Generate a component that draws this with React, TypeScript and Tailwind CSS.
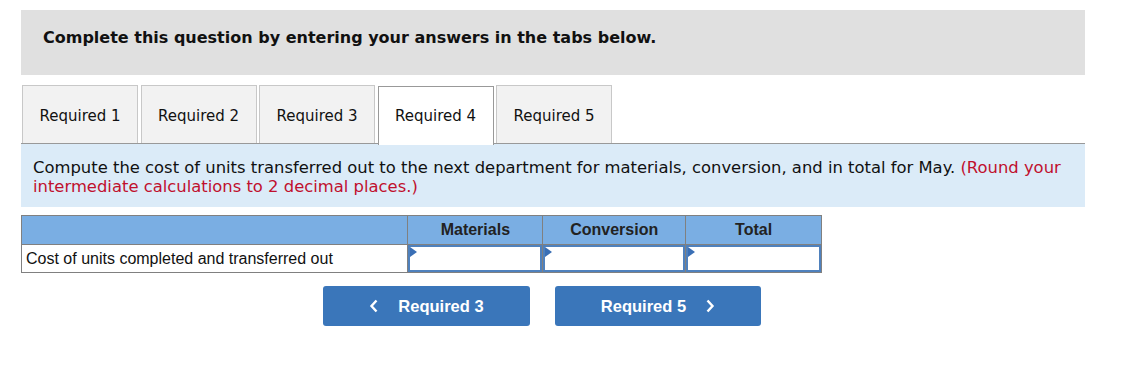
import React from "react";

const tabs = ["Required 1", "Required 2", "Required 3", "Required 4", "Required 5"];

function InputCell() {
  return (
    <td className="border border-[#808080] p-0 h-[28px]">
      <div className="relative h-full border-2 border-[#4f81bd] bg-white">
        <div className="absolute left-0 top-0 w-0 h-0 border-t-[5px] border-b-[5px] border-l-[7px] border-t-transparent border-b-transparent border-l-[#3a6fb5]" />
      </div>
    </td>
  );
}

export default function App() {
  return (
    <div className="w-[1135px] h-[390px] bg-white pt-[10px] pl-[21px]" style={{ fontFamily: '"DejaVu Sans", Verdana, sans-serif' }}>
      <div className="w-[1064px] h-[65px] bg-[#e0e0e0] pl-[22px] pt-[16px]">
        <div className="text-[16px] font-bold text-[#111]">Complete this question by entering your answers in the tabs below.</div>
      </div>
      <div className="mt-[10px] w-[1064px] flex gap-[2.5px] pl-[1px] border-b border-[#999] h-[59px]">
        {tabs.map((t, i) => (
          <div
            key={t}
            className={
              i === 3
                ? "w-[116px] h-[59px] bg-white border border-[#999] border-b-0 flex items-center justify-center pt-[1px] text-[15px] text-[#111] relative top-[1px]"
                : "w-[116px] h-[58px] bg-[#f2f2f2] border border-[#c8c8c8] border-b-0 flex items-center justify-center pt-[3px] text-[15px] text-[#111]"
            }
          >
            {t}
          </div>
        ))}
      </div>
      <div className="w-[1064px] h-[63px] bg-[#dbebf8] pl-[12px] pt-[14px] text-[16.4px] leading-[19px] text-[#111]">
        Compute the cost of units transferred out to the next department for materials, conversion, and in total for May.{" "}
        <span className="text-[#c0102e]">(Round your intermediate calculations to 2 decimal places.)</span>
      </div>
      <table className="mt-[8px] border-collapse w-[801px]" style={{ fontFamily: '"Liberation Sans", Arial, sans-serif' }}>
        <thead>
          <tr className="bg-[#7aaee3] h-[29px]">
            <th className="border border-[#808080] w-[387px]"></th>
            <th className="border border-[#808080] w-[135px] text-[16px] font-bold text-[#222]">Materials</th>
            <th className="border border-[#808080] w-[143px] text-[16px] font-bold text-[#222]">Conversion</th>
            <th className="border border-[#808080] w-[136px] text-[16px] font-bold text-[#222]">Total</th>
          </tr>
        </thead>
        <tbody>
          <tr>
            <td className="border border-[#808080] text-[16px] text-[#111] pl-[4px] h-[28px]">Cost of units completed and transferred out</td>
            <InputCell />
            <InputCell />
            <InputCell />
          </tr>
        </tbody>
      </table>
      <div className="flex gap-[25px] mt-[13px] ml-[302px]" style={{ fontFamily: '"Liberation Sans", Arial, sans-serif' }}>
        <button className="w-[207px] h-[40px] bg-[#3a76ba] rounded-[3px] text-white text-[16.5px] font-bold flex items-center justify-center gap-[19px]">
          <svg width="10" height="14" viewBox="0 0 10 14"><path d="M7.5 1.5 L2.5 7 L7.5 12.5" stroke="white" strokeWidth="2.4" fill="none" /></svg>
          <span>Required 3</span>
        </button>
        <button className="w-[206px] h-[40px] bg-[#3a76ba] rounded-[3px] text-white text-[16.5px] font-bold flex items-center justify-center gap-[19px]">
          <span>Required 5</span>
          <svg width="10" height="14" viewBox="0 0 10 14"><path d="M2.5 1.5 L7.5 7 L2.5 12.5" stroke="white" strokeWidth="2.4" fill="none" /></svg>
        </button>
      </div>
    </div>
  );
}
